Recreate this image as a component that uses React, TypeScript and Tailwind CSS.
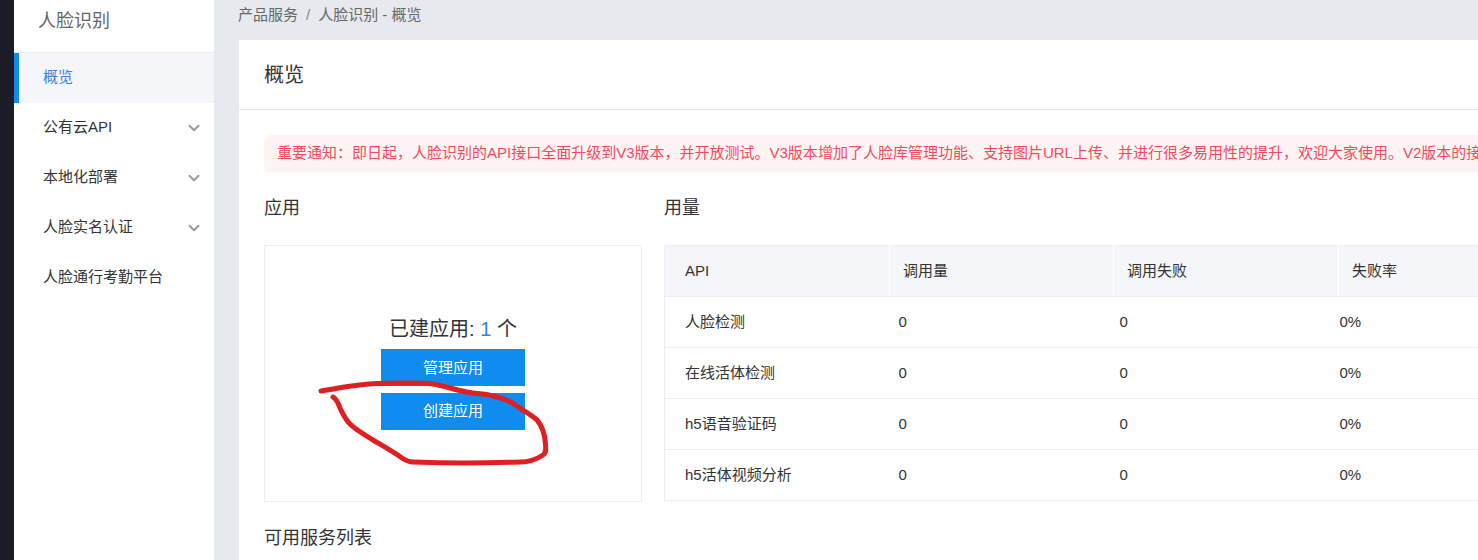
import React from 'react';
import { ChevronDown } from 'lucide-react';

const font = "font-['Liberation_Sans','Noto_Sans_CJK_SC',sans-serif]";

const menu = [
  { label: '概览', active: true },
  { label: '公有云API', arrow: true },
  { label: '本地化部署', arrow: true },
  { label: '人脸实名认证', arrow: true },
  { label: '人脸通行考勤平台' },
];

const rows = ['人脸检测', '在线活体检测', 'h5语音验证码', 'h5活体视频分析'];

const Sidebar: React.FC = () => (
  <aside className="w-[200px] shrink-0 bg-white">
    <div className="h-[53px] border-b border-[#e9ecf1] pl-[24px] pt-[8px] text-[18px] leading-[26px] text-[#666]">人脸识别</div>
    {menu.map((item) => (
      <div
        key={item.label}
        className={
          item.active
            ? 'flex h-[50px] items-center border-l-[5px] border-[#108cee] bg-[#f5f6fa] pb-[1px] pl-[24px] text-[15px] text-[#2f86e0]'
            : 'flex h-[50px] items-center justify-between pb-[1px] pl-[29px] pr-[11px] text-[15px] text-[#333]'
        }
      >
        <span>{item.label}</span>
        {item.arrow && <ChevronDown size={18} strokeWidth={2.5} className="text-[#999]" />}
      </div>
    ))}
  </aside>
);

const Scribble: React.FC = () => (
  <svg className="pointer-events-none absolute left-[300px] top-[370px]" width="260" height="105" viewBox="300 370 260 105" fill="none">
    <path
      d="M321 391 C340 388 358 384 377 383.500 C400 383 420 382 433 384 C445 386 455 390 467 392 C478 394 486 394 493 396 C502 398 508 400 514 404 C522 410 530 414 537 420 C543 427 545 436 545.500 444 C546 450 546 453 543 455 C537 459 531 462 520 462 C490 463 440 463 413 462 C408 462 405 460 402 458 C392 451 383 446 373 440 C365 435 356 430 350 424 C345 419 343 414 340 408 C338 403 337 399 333 397"
      stroke="#e01f22"
      strokeWidth="5"
      strokeLinecap="round"
      strokeLinejoin="round"
    />
  </svg>
);

const App: React.FC = () => {
  return (
    <div className={`${font} relative flex h-[560px] w-[1478px] overflow-hidden bg-[#e6e9ee]`}>
      <div className="w-[14px] shrink-0 bg-[#1b1c28]" />
      <Sidebar />
      <main className="min-w-0 flex-1 pl-[25px]">
        <div className="-ml-px h-[40px] pt-[5px] text-[15px] leading-[20px] text-[#666]">
          产品服务<span className="mx-[8px] text-[#888]">/</span>人脸识别 - 概览
        </div>
        <div className="h-[520px] w-[1400px] bg-white">
          <div className="h-[70px] border-b border-[#e6e9ee] pl-[25px] pt-[21px] text-[20px] leading-[28px] text-[#333]">概览</div>
          <div className="pl-[25px] pt-[25px]">
            <div className="h-[37px] w-[1300px] overflow-hidden whitespace-nowrap rounded-[6px] bg-[#fff4f4] pl-[13px] text-[15px] leading-[36px] text-[#f44a5c]">
              重要通知：即日起，人脸识别的API接口全面升级到V3版本，并开放测试。V3版本增加了人脸库管理功能、支持图片URL上传、并进行很多易用性的提升，欢迎大家使用。V2版本的接口将逐步停止维护。
            </div>
            <div className="mt-[22px] flex gap-[22px]">
              <section className="w-[378px]">
                <h2 className="h-[51px] text-[18px] leading-[28px] text-[#333]">应用</h2>
                <div className="flex h-[257px] flex-col items-center border border-[#eceef2] pt-[69px]">
                  <div className="h-[34px] text-[20px] leading-[28px] text-[#333]">
                    已建应用: <span className="text-[#2f86e0]">1</span> 个
                  </div>
                  <button className="h-[37px] w-[144px] bg-[#108cee] pt-[1px] text-[15px] text-white">管理应用</button>
                  <button className="mt-[7px] h-[37px] w-[144px] bg-[#108cee] text-[15px] text-white">创建应用</button>
                </div>
              </section>
              <section className="w-[900px]">
                <h2 className="h-[51px] text-[18px] leading-[28px] text-[#333]">用量</h2>
                <table className="w-[900px] table-fixed border border-[#eceef2] text-left text-[15px] text-[#333]">
                  <thead className="bg-[#f5f6fa]">
                    <tr className="h-[51px]">
                      <th className="w-[225px] border-r border-white pl-[20px] font-normal">API</th>
                      <th className="w-[224px] border-r border-white pl-[13px] font-normal">调用量</th>
                      <th className="w-[225px] border-r border-white pl-[13px] font-normal">调用失败</th>
                      <th className="pl-[13px] font-normal">失败率</th>
                    </tr>
                  </thead>
                  <tbody>
                    {rows.map((name) => (
                      <tr key={name} className="h-[51px] border-t border-[#eceef2]">
                        <td className="pl-[20px]">{name}</td>
                        <td className="pl-[9px]">0</td>
                        <td className="pl-[6px]">0</td>
                        <td className="pl-[1px]">0%</td>
                      </tr>
                    ))}
                  </tbody>
                </table>
              </section>
            </div>
            <h2 className="mt-[22px] text-[18px] leading-[28px] text-[#333]">可用服务列表</h2>
          </div>
        </div>
      </main>
      <Scribble />
    </div>
  );
};

export default App;
